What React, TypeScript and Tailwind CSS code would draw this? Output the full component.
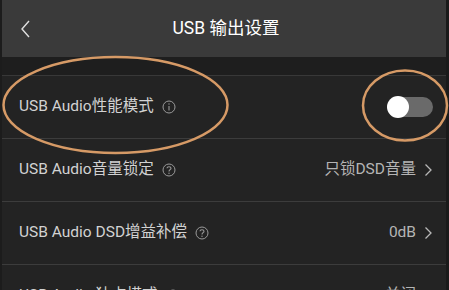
import React from "react";

const font = { fontFamily: 'Roboto, "Noto Sans CJK SC", sans-serif' };

function InfoIcon() {
  return (
    <svg width="14" height="14" viewBox="0 0 14 14" className="ml-[8px]">
      <circle cx="7" cy="7" r="6" fill="none" stroke="#9a9a9a" strokeWidth="1" />
      <line x1="7" y1="6" x2="7" y2="10.5" stroke="#9a9a9a" strokeWidth="1.1" />
      <circle cx="7" cy="4" r="0.7" fill="#9a9a9a" />
    </svg>
  );
}

function QIcon() {
  return (
    <svg width="14" height="14" viewBox="0 0 14 14" className="ml-[8px]">
      <circle cx="7" cy="7" r="6" fill="none" stroke="#9a9a9a" strokeWidth="1" />
      <path d="M5 5.3 C5 3.2 9 3.2 9 5.3 C9 6.6 7 6.8 7 8.4" fill="none" stroke="#9a9a9a" strokeWidth="1.1" />
      <circle cx="7" cy="10.3" r="0.7" fill="#9a9a9a" />
    </svg>
  );
}

function Chevron() {
  return (
    <svg width="10" height="14" viewBox="0 0 10 14" className="ml-[7px]">
      <path d="M2.5 1.5 L8 7 L2.5 12.5" fill="none" stroke="#b8b8b8" strokeWidth="1.3" />
    </svg>
  );
}

function Row({ children, right }: { children: React.ReactNode; right?: React.ReactNode }) {
  return (
    <div className="h-[63px] shrink-0 flex items-center justify-between pl-[17px] pr-[13px] border-b border-[#3c3c3c]">
      <div className="flex items-center text-[15.5px] text-[#d2d2d2]">{children}</div>
      <div className="flex items-center text-[15.5px] text-[#b5b5b5]">{right}</div>
    </div>
  );
}

export default function App() {
  return (
    <div className="relative w-[449px] h-[290px] overflow-hidden bg-[#232323]" style={font}>
      <div className="flex h-full">
        <div className="w-[2px] shrink-0 bg-[#1c1c1c]" />
        <div className="flex-1 flex flex-col">
          <div className="h-[57px] shrink-0 bg-[#3a3a3a] flex items-center relative">
            <svg width="12" height="20" viewBox="0 0 12 20" className="ml-[18px]">
              <path d="M9 2 L2 10 L9 18" fill="none" stroke="#e0e0e0" strokeWidth="1.4" />
            </svg>
            <div className="absolute inset-0 flex items-center justify-center text-[17.5px] text-white pl-[4px]">
              USB 输出设置
            </div>
          </div>
          <div className="h-[19px] shrink-0 bg-[#1e1e1e] border-b border-[#383838]" />
          <Row
            right={
              <div className="w-[45px] h-[20px] rounded-full bg-[#6a6a6a] relative">
                <div className="absolute left-[-1px] top-[-1px] w-[22px] h-[22px] rounded-full bg-white" />
              </div>
            }
          >
            USB Audio性能模式
            <InfoIcon />
          </Row>
          <Row
            right={
              <>
                只锁DSD音量
                <Chevron />
              </>
            }
          >
            USB Audio音量锁定
            <QIcon />
          </Row>
          <Row
            right={
              <>
                0dB
                <Chevron />
              </>
            }
          >
            USB Audio DSD增益补偿
            <QIcon />
          </Row>
          <Row
            right={
              <>
                关闭
                <Chevron />
              </>
            }
          >
            USB Audio 独占模式
            <QIcon />
          </Row>
        </div>
        <div className="w-[3px] shrink-0 bg-[#1a1a1a]" />
      </div>
      <svg className="absolute left-0 top-0 pointer-events-none" width="449" height="290">
        <ellipse cx="115.5" cy="105" rx="112" ry="48" fill="none" stroke="#d69a66" strokeWidth="2.5" />
        <ellipse cx="405" cy="105.5" rx="42" ry="35" fill="none" stroke="#d69a66" strokeWidth="2.5" />
      </svg>
    </div>
  );
}
